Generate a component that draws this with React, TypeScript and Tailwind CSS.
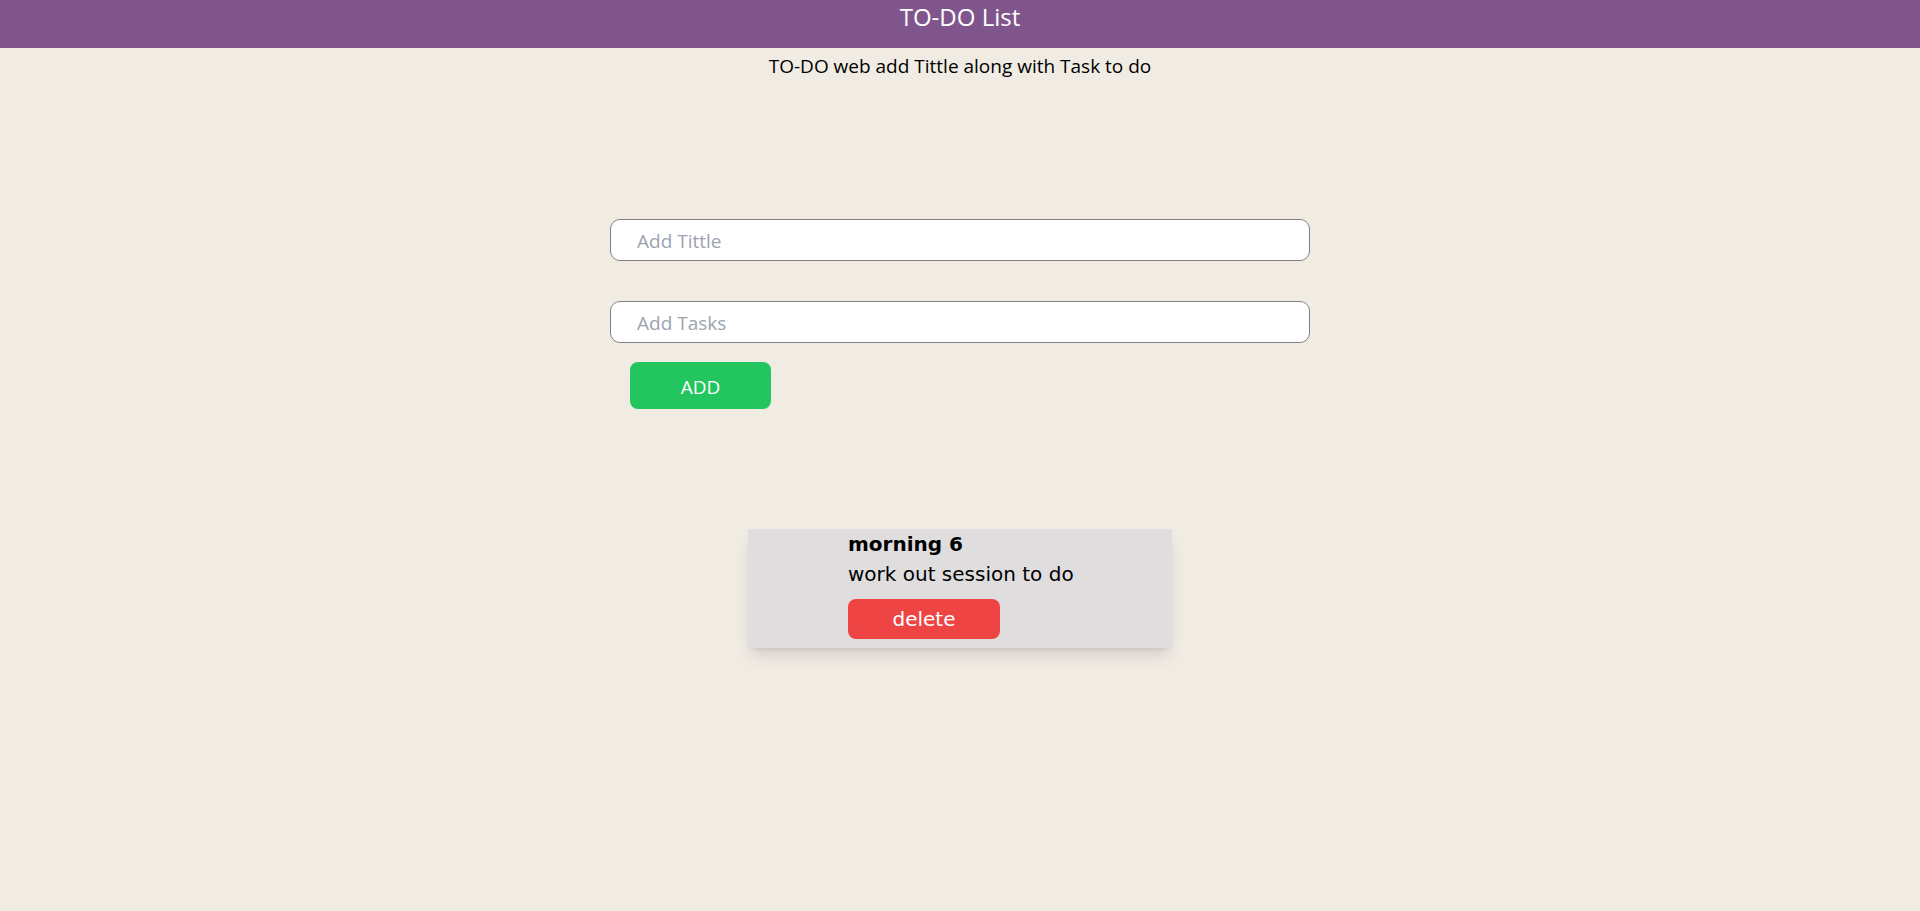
import React, { useState } from "react";

type Todo = { title: string; task: string };

const App = () => {
  const [title, setTitle] = useState("");
  const [task, setTask] = useState("");
  const [todos, setTodos] = useState<Todo[]>([
    { title: "morning 6", task: "work out session to do" },
  ]);

  const addTodo = () => {
    if (!title.trim() || !task.trim()) return;
    setTodos(prev => [...prev, { title, task }]);
    setTitle("");
    setTask("");
  };

  const deleteTodo = (index: number) => {
    setTodos(prev => prev.filter((_, i) => i !== index));
  };

  return (
    <div className="min-h-screen bg-[#f0ebe3] font-['Open_Sans',sans-serif] text-black">
      <header className="h-[48px] bg-[#80558c] flex justify-center">
        <h1 className="text-[24px] leading-[34px] text-white">TO-DO List</h1>
      </header>
      <p className="text-center text-[19px] leading-[30px] mt-[3px]">
        TO-DO web add Tittle along with Task to do
      </p>

      <div className="w-[700px] mx-auto mt-[138px]">
        <input
          value={title}
          onChange={e => setTitle(e.target.value)}
          placeholder="Add Tittle"
          className="w-full h-[42px] rounded-[10px] border border-[#808080] bg-white pl-[26px] pt-[2px] text-[19px] outline-none placeholder:text-[#9ca3af]"
        />
        <input
          value={task}
          onChange={e => setTask(e.target.value)}
          placeholder="Add Tasks"
          className="w-full h-[42px] rounded-[10px] border border-[#808080] bg-white pl-[26px] pt-[2px] text-[19px] outline-none mt-[40px] placeholder:text-[#9ca3af]"
        />
        <button
          onClick={addTodo}
          className="ml-[20px] mt-[19px] w-[141px] h-[47px] rounded-[8px] bg-[#22c55e] text-white text-[19px] pt-[3px]"
        >
          ADD
        </button>
      </div>

      <div className="flex flex-col items-center mt-[120px] font-['DejaVu_Sans',sans-serif]">
        {todos.map((todo, index) => (
          <div
            key={index}
            className="w-[424px] bg-[#dfdddd] pl-[100px] pb-[9px] shadow-[0_10px_15px_-3px_rgba(0,0,0,0.12),0_4px_6px_-4px_rgba(0,0,0,0.1)]"
          >
            <h2 className="text-[20px] leading-[30px] font-bold">{todo.title}</h2>
            <p className="text-[20px] leading-[30px]">{todo.task}</p>
            <button
              onClick={() => deleteTodo(index)}
              className="mt-[10px] w-[152px] h-[40px] rounded-[8px] bg-[#ef4444] text-white text-[20px]"
            >
              delete
            </button>
          </div>
        ))}
      </div>
    </div>
  );
};

export default App;
